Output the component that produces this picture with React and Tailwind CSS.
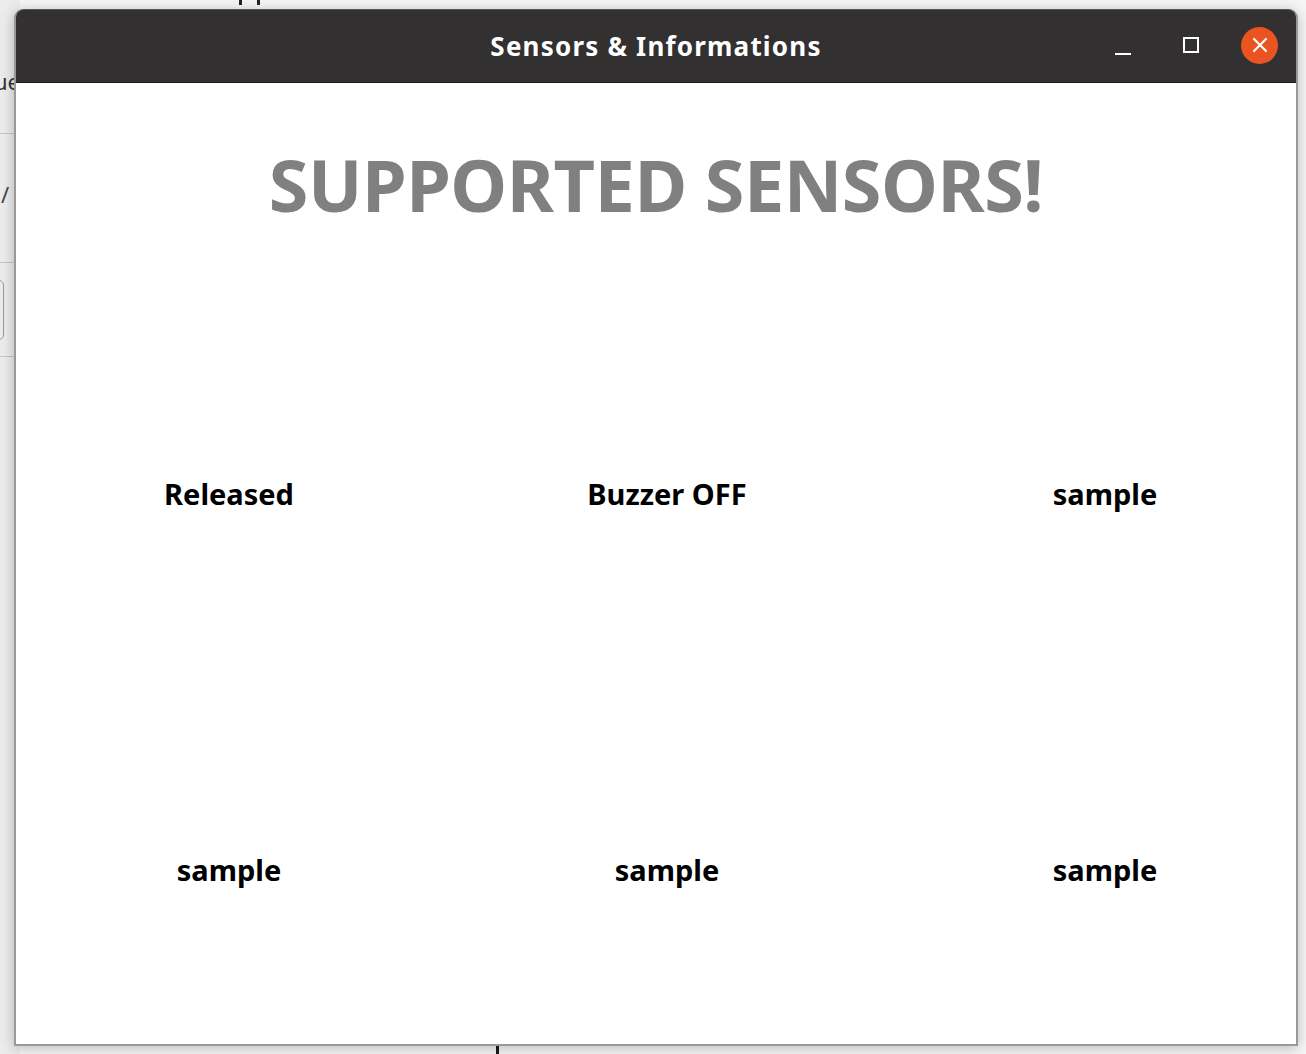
import React from "react";

const labels = ["Released", "Buzzer OFF", "sample", "sample", "sample", "sample"];

function WindowControls() {
  return (
    <div className="absolute right-[18px] top-0 h-full flex items-center">
      <svg width="16" height="16" viewBox="0 0 16 16" className="mt-[6px]">
        <line x1="0" y1="13" x2="16" y2="13" stroke="white" strokeWidth="2" />
      </svg>
      <svg width="16" height="16" viewBox="0 0 16 16" className="ml-[52px] -mt-[2px]">
        <rect x="1" y="1" width="14" height="14" fill="none" stroke="white" strokeWidth="2" />
      </svg>
      <div className="ml-[42px] w-[37px] h-[37px] rounded-full bg-[#e95420] flex items-center justify-center -mt-[2px]">
        <svg width="16" height="16" viewBox="0 0 16 16">
          <path d="M2 2 L14 14 M14 2 L2 14" stroke="white" strokeWidth="2.2" strokeLinecap="round" />
        </svg>
      </div>
    </div>
  );
}

// bits of another app window peeking out behind this one
function Backdrop() {
  return (
    <div className="absolute inset-0 flex">
      <div className="w-[20px] h-full bg-[#ececec] flex flex-col overflow-hidden">
        <div className="mt-[70px] ml-[-6px] text-[22px] text-[#333] leading-none h-[63px]">ue</div>
        <div className="h-px bg-[#c6c6c6]" />
        <div className="mt-[49px] ml-[1px] text-[22px] text-[#444] leading-none h-[79px]">/</div>
        <div className="h-px bg-[#c6c6c6]" />
        <div className="mt-[17px] ml-[-10px] w-[14px] h-[60px] rounded-[5px] border border-[#9a9a9a]" />
        <div className="mt-[16px] h-px bg-[#c6c6c6]" />
      </div>
      <div className="flex-1 flex flex-col justify-between">
        <div className="flex gap-[15px] ml-[219px]">
          <div className="w-[3px] h-[5px] bg-[#222]" />
          <div className="w-[3px] h-[5px] bg-[#222]" />
        </div>
        <div className="ml-[476px] w-[3px] h-[10px] bg-[#1a1a1a]" />
      </div>
    </div>
  );
}

export default function App() {
  return (
    <div className="relative w-[1306px] h-[1054px] overflow-hidden bg-[#f6f6f6] font-['Noto_Sans',sans-serif]">
      <Backdrop />

      {/* window */}
      <div className="absolute left-[14px] top-[9px] w-[1284px] h-[1037px] flex flex-col rounded-t-[9px] border-x-2 border-b-2 border-[#999] shadow-[0_2px_14px_rgba(0,0,0,0.25)] bg-white">
        <div className="relative h-[74px] shrink-0 rounded-t-[8px] bg-[#323031] border-t border-[#555] border-b border-b-[#1c1c1c] flex items-center justify-center">
          <span className="text-white font-bold text-[26px] tracking-[1.2px] mt-[1px]">Sensors &amp; Informations</span>
          <WindowControls />
        </div>
        <div className="flex-1 overflow-hidden flex flex-col">
          <h1 className="mt-[53px] text-center text-[#808080] font-bold text-[72px] leading-[96px] tracking-[-0.5px]">
            SUPPORTED SENSORS!
          </h1>
          <div className="mt-[74px] ml-[-6px] grid grid-cols-[438px_438px_438px] grid-rows-[376px_376px]">
            {labels.map((l, i) => (
              <div key={i} className="flex items-center justify-center text-black font-bold text-[29px]">
                {l}
              </div>
            ))}
          </div>
        </div>
      </div>
    </div>
  );
}
